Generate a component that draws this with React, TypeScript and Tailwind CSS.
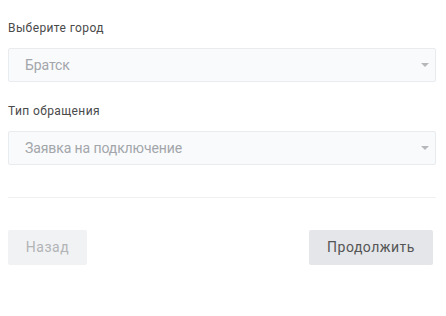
import React from 'react';

const SelectField = ({ label, value }: { label: string; value: string }) => (
  <div>
    <label className="block text-[12px] leading-4 tracking-[0.4px] text-[#4a4a4a] mb-3">{label}</label>
    <div className="relative flex items-center h-[34px] w-full border border-[#e9ecef] bg-[#f9fafc] rounded-[2px] pl-4 pr-8">
      <span className="text-[14px] tracking-[-0.1px] text-[#a2a6aa]">{value}</span>
      <span className="absolute right-[6px] top-1/2 -translate-y-1/2 w-0 h-0 border-l-[4px] border-r-[4px] border-t-[4px] border-l-transparent border-r-transparent border-t-[#b5b8bb]" />
    </div>
  </div>
);

const App: React.FC = () => {
  return (
    <div className="w-[446px] h-[316px] bg-white pl-2 pr-[10px] pt-5" style={{ fontFamily: 'Roboto, "Liberation Sans", sans-serif' }}>
      <div className="space-y-[21px]">
        <SelectField label="Выберите город" value="Братск" />
        <SelectField label="Тип обращения" value="Заявка на подключение" />
      </div>
      <div className="mt-[32px] border-t border-[#eef0f2]" />
      <div className="mt-[32px] flex justify-between pr-[3px]">
        <button
          type="button"
          className="h-[35px] w-[79px] bg-[#f1f2f4] text-[14px] text-[#b2b4b6] tracking-[0.5px] rounded-[2px]"
        >
          Назад
        </button>
        <button
          type="button"
          className="h-[35px] w-[124px] bg-[#e4e6e9] text-[14px] text-[#555] tracking-[0.5px] rounded-[2px]"
        >
          Продолжить
        </button>
      </div>
    </div>
  );
};

export default App;
